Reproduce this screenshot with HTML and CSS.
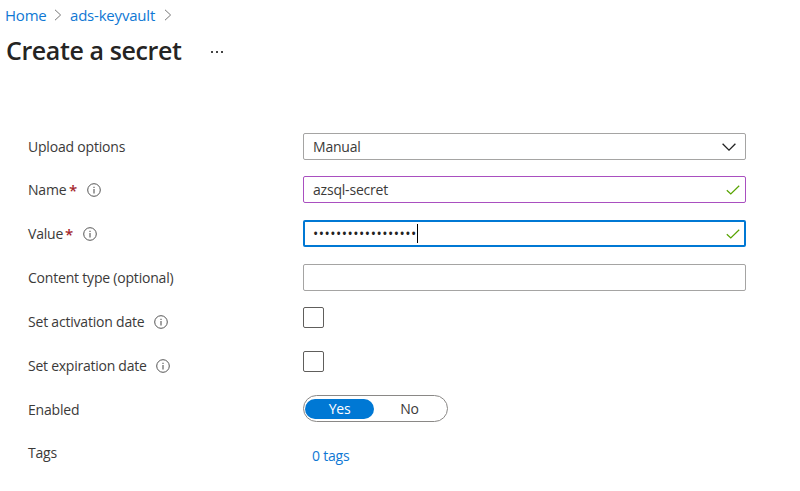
FILE: index.html
```html
<!DOCTYPE html>
<html lang="en">
<head>
<meta charset="utf-8">
<title>Create a secret</title>
<link rel="stylesheet" href="styles.css">
</head>
<body>
<svg class="defs" aria-hidden="true">
  <symbol id="info" viewBox="0 0 14 14"><circle cx="7" cy="7" r="6.3" fill="none" stroke="#555" stroke-width="1"/><path d="M7 6v4.4M7 3.7v1.2" fill="none" stroke="#555" stroke-width="1.1"/></symbol>
  <symbol id="sep" viewBox="0 0 8 12"><path d="M1 .8 6.6 6 1 11.2" fill="none" stroke="#777" stroke-width="1"/></symbol>
  <symbol id="check" viewBox="0 0 14 10"><path d="M.8 5.2 4.8 9 13.2.7" fill="none" stroke="#57a300" stroke-width="1.2"/></symbol>
</svg>
<nav class="crumbs">
  <a class="home">Home</a><svg class="sep"><use href="#sep"/></svg><a class="vault">ads-keyvault</a><svg class="sep"><use href="#sep"/></svg>
</nav>
<header class="head"><h1>Create a secret</h1><svg class="more" viewBox="0 0 14 2"><path d="M1 0h2v2H1zM6 0h2v2H6zM11 0h2v2h-2z" fill="#444"/></svg></header>
<main class="form">
  <div class="row"><div class="label"><span class="upload">Upload options</span></div>
    <div class="box select"><span class="manual">Manual</span><svg class="chev" viewBox="0 0 14 8"><path d="M.6.7 7 7.1 13.4.7" fill="none" stroke="#222" stroke-width="1.3"/></svg></div></div>
  <div class="row"><div class="label"><span class="name">Name</span><b>*</b><svg class="info"><use href="#info"/></svg></div>
    <div class="box accepted"><span class="secret">azsql-secret</span><svg class="check"><use href="#check"/></svg></div></div>
  <div class="row"><div class="label"><span class="value">Value</span><b>*</b><svg class="info"><use href="#info"/></svg></div>
    <div class="box focus"><span class="dots">••••••••••••••••••</span><i class="caret"></i><svg class="check"><use href="#check"/></svg></div></div>
  <div class="row"><div class="label"><span class="content">Content type (optional)</span></div>
    <div class="box blank"></div></div>
  <div class="row"><div class="label"><span class="activation">Set activation date</span><svg class="info"><use href="#info"/></svg></div>
    <div class="checkbox"></div></div>
  <div class="row"><div class="label"><span class="expiration">Set expiration date</span><svg class="info"><use href="#info"/></svg></div>
    <div class="checkbox"></div></div>
  <div class="row"><div class="label"><span class="enabled">Enabled</span></div>
    <div class="toggle"><span class="on">Yes</span><span class="off">No</span></div></div>
  <div class="row"><div class="label"><span class="tags">Tags</span></div>
    <a class="taglink">0 tags</a></div>
</main>
</body>
</html>
```
FILE: styles.css
```css
* { box-sizing: border-box; }
body { margin: 0; height: 491px; overflow: hidden; background: #fff; color: #3b3a39; font: 14px/20px "Open Sans", "Noto Sans", sans-serif; letter-spacing: -.2px; }
.defs { position: absolute; width: 0; height: 0; }
svg { display: block; flex: none; }
span, a { white-space: nowrap; }
a { color: #0f78d4; }
.crumbs { display: flex; align-items: center; height: 30px; padding-left: 5px; font-size: 15px; }
.home { width: 41px; }
.vault { width: 86px; }
.sep { width: 8px; height: 12px; margin: 0 8px; }
.head { display: flex; align-items: center; height: 40px; padding-left: 6px; }
h1 { margin: 0; width: 204px; font-size: 25px; line-height: 34px; font-weight: 600; color: #252423; letter-spacing: -.4px; white-space: nowrap; }
.more { width: 14px; height: 2px; margin-top: 4px; }
.form { display: grid; grid-template-rows: 43px repeat(5, 44px) 43px 44px; margin-top: 55px; padding-left: 28px; }
.row { display: grid; grid-template-columns: 275px 443px; align-items: center; }
.label { display: flex; align-items: center; }
.label b { width: 8px; margin-left: 4px; color: #a4262c; font-size: 15px; font-weight: 600; }
.info { width: 14px; height: 14px; margin-left: 10px; }
.name { width: 37px; }
.value { width: 33px; }
.activation { width: 116px; }
.expiration { width: 118px; letter-spacing: -.25px; }
.box { display: flex; align-items: center; height: 27px; padding: 0 5px 0 9px; border: 1px solid #a5a4a3; border-radius: 2px; }
.box svg { margin-left: auto; }
.box .chev { width: 14px; height: 8px; margin-right: 4px; }
.check { width: 14px; height: 10px; }
.accepted { margin-top: -1px; border-color: #a94fc0; }
.focus { margin-top: -1px; border: 2px solid #0078d4; padding: 0 4px 0 8px; }
.blank { margin-top: -1px; }
.dots { color: #222; letter-spacing: .5px; }
.caret { width: 1px; height: 19px; background: #000; }
.checkbox { width: 21px; height: 21px; margin-top: -10px; border: 1px solid #605e5c; border-radius: 2px; }
.toggle { display: flex; align-items: center; width: 145px; height: 27px; margin-top: -2px; padding: 0 2px 0 1px; border: 1px solid #8a8886; border-radius: 14px; }
.on { width: 70px; height: 20px; border-radius: 10px; background: #0078d4; color: #fff; text-align: center; }
.off { width: 72px; text-align: center; }
.taglink { margin: 6px 0 0 9px; }
```
